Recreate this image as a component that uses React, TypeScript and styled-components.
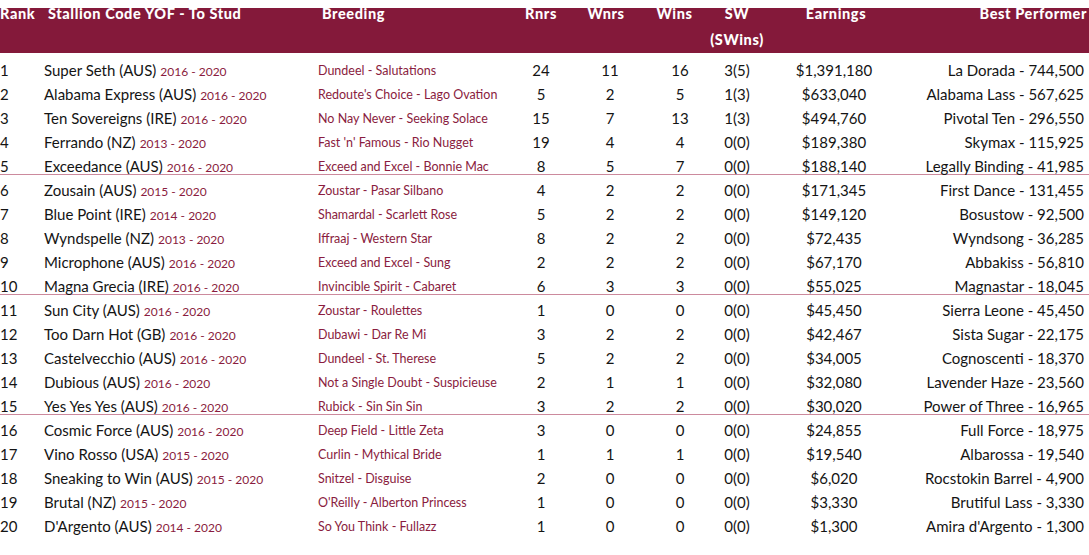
import React from "react";
import styled, { createGlobalStyle } from "styled-components";

const Global = createGlobalStyle`
  html, body { margin: 0; padding: 0; background: #ffffff; }
  body { font-family: Lato, "Open Sans", sans-serif; color: #141414; }
`;

const COLS = "44px 274px 190px 66px 72px 68px 46px 148px 1fr";

const Page = styled.div`
  width: 1089px;
  height: 555px;
  overflow: hidden;
  padding-top: 8px;
  box-sizing: border-box;
`;

const Header = styled.div`
  display: grid;
  grid-template-columns: ${COLS};
  height: 45px;
  background: #84193a;
  color: #ffffff;
  font-weight: 900;
  font-size: 14.5px;
  letter-spacing: 0.6px;
`;

const HCell = styled.div<{ $align?: "left" | "center" | "right"; $pl?: number; $pr?: number }>`
  display: flex;
  flex-direction: column;
  align-items: ${(p) => (p.$align === "left" ? "flex-start" : p.$align === "right" ? "flex-end" : "center")};
  line-height: 26px;
  margin-top: -7px;
  padding-left: ${(p) => p.$pl ?? 0}px;
  padding-right: ${(p) => p.$pr ?? 0}px;
  white-space: nowrap;
`;

const Body = styled.div`
  margin-top: 5px;
`;

const Row = styled.div<{ $sep?: boolean }>`
  display: grid;
  grid-template-columns: ${COLS};
  height: 24px;
  align-items: center;
  font-size: 15px;
  background: ${(p) =>
    p.$sep ? "linear-gradient(#cc8a9d, #cc8a9d) 0 calc(100% - 3px) / 100% 1px no-repeat" : "none"};
`;

const Cell = styled.div<{ $align?: "left" | "center" | "right"; $pr?: number }>`
  display: flex;
  justify-content: ${(p) => (p.$align === "left" ? "flex-start" : p.$align === "right" ? "flex-end" : "center")};
  align-items: baseline;
  white-space: nowrap;
  padding-right: ${(p) => p.$pr ?? 0}px;
`;

const Years = styled.span`
  font-size: 12px;
  color: #8a1c40;
  margin-left: 4px;
`;

const Breeding = styled.span`
  font-size: 12.5px;
  color: #8a1c40;
`;

type R = [string, string, string, string, string, string, string, string, string, string];

const rows: R[] = [
  ["1", "Super Seth (AUS)", "2016 - 2020", "Dundeel - Salutations", "24", "11", "16", "3(5)", "$1,391,180", "La Dorada - 744,500"],
  ["2", "Alabama Express (AUS)", "2016 - 2020", "Redoute's Choice - Lago Ovation", "5", "2", "5", "1(3)", "$633,040", "Alabama Lass - 567,625"],
  ["3", "Ten Sovereigns (IRE)", "2016 - 2020", "No Nay Never - Seeking Solace", "15", "7", "13", "1(3)", "$494,760", "Pivotal Ten - 296,550"],
  ["4", "Ferrando (NZ)", "2013 - 2020", "Fast 'n' Famous - Rio Nugget", "19", "4", "4", "0(0)", "$189,380", "Skymax - 115,925"],
  ["5", "Exceedance (AUS)", "2016 - 2020", "Exceed and Excel - Bonnie Mac", "8", "5", "7", "0(0)", "$188,140", "Legally Binding - 41,985"],
  ["6", "Zousain (AUS)", "2015 - 2020", "Zoustar - Pasar Silbano", "4", "2", "2", "0(0)", "$171,345", "First Dance - 131,455"],
  ["7", "Blue Point (IRE)", "2014 - 2020", "Shamardal - Scarlett Rose", "5", "2", "2", "0(0)", "$149,120", "Bosustow - 92,500"],
  ["8", "Wyndspelle (NZ)", "2013 - 2020", "Iffraaj - Western Star", "8", "2", "2", "0(0)", "$72,435", "Wyndsong - 36,285"],
  ["9", "Microphone (AUS)", "2016 - 2020", "Exceed and Excel - Sung", "2", "2", "2", "0(0)", "$67,170", "Abbakiss - 56,810"],
  ["10", "Magna Grecia (IRE)", "2016 - 2020", "Invincible Spirit - Cabaret", "6", "3", "3", "0(0)", "$55,025", "Magnastar - 18,045"],
  ["11", "Sun City (AUS)", "2016 - 2020", "Zoustar - Roulettes", "1", "0", "0", "0(0)", "$45,450", "Sierra Leone - 45,450"],
  ["12", "Too Darn Hot (GB)", "2016 - 2020", "Dubawi - Dar Re Mi", "3", "2", "2", "0(0)", "$42,467", "Sista Sugar - 22,175"],
  ["13", "Castelvecchio (AUS)", "2016 - 2020", "Dundeel - St. Therese", "5", "2", "2", "0(0)", "$34,005", "Cognoscenti - 18,370"],
  ["14", "Dubious (AUS)", "2016 - 2020", "Not a Single Doubt - Suspicieuse", "2", "1", "1", "0(0)", "$32,080", "Lavender Haze - 23,560"],
  ["15", "Yes Yes Yes (AUS)", "2016 - 2020", "Rubick - Sin Sin Sin", "3", "2", "2", "0(0)", "$30,020", "Power of Three - 16,965"],
  ["16", "Cosmic Force (AUS)", "2016 - 2020", "Deep Field - Little Zeta", "3", "0", "0", "0(0)", "$24,855", "Full Force - 18,975"],
  ["17", "Vino Rosso (USA)", "2015 - 2020", "Curlin - Mythical Bride", "1", "1", "1", "0(0)", "$19,540", "Albarossa - 19,540"],
  ["18", "Sneaking to Win (AUS)", "2015 - 2020", "Snitzel - Disguise", "2", "0", "0", "0(0)", "$6,020", "Rocstokin Barrel - 4,900"],
  ["19", "Brutal (NZ)", "2015 - 2020", "O'Reilly - Alberton Princess", "1", "0", "0", "0(0)", "$3,330", "Brutiful Lass - 3,330"],
  ["20", "D'Argento (AUS)", "2014 - 2020", "So You Think - Fullazz", "1", "0", "0", "0(0)", "$1,300", "Amira d'Argento - 1,300"],
];

export default function App() {
  return (
    <>
      <Global />
      <Page>
        <Header>
          <HCell $align="left">Rank</HCell>
          <HCell $align="left" $pl={4}>Stallion Code YOF - To Stud</HCell>
          <HCell $align="left" $pl={4}>Breeding</HCell>
          <HCell>Rnrs</HCell>
          <HCell $pr={8}>Wnrs</HCell>
          <HCell $pr={11}>Wins</HCell>
          <HCell>
            <span>SW</span>
            <span>(SWins)</span>
          </HCell>
          <HCell $pl={4}>Earnings</HCell>
          <HCell $align="right" $pr={2}>Best Performer</HCell>
        </Header>
        <Body>
          {rows.map((r, i) => (
            <Row key={r[0]} $sep={i === 4 || i === 9 || i === 14}>
              <Cell $align="left">{r[0]}</Cell>
              <Cell $align="left">
                {r[1]}
                <Years>{r[2]}</Years>
              </Cell>
              <Cell $align="left">
                <Breeding>{r[3]}</Breeding>
              </Cell>
              <Cell>{r[4]}</Cell>
              <Cell>{r[5]}</Cell>
              <Cell>{r[6]}</Cell>
              <Cell>{r[7]}</Cell>
              <Cell>{r[8]}</Cell>
              <Cell $align="right" $pr={5}>{r[9]}</Cell>
            </Row>
          ))}
        </Body>
      </Page>
    </>
  );
}
